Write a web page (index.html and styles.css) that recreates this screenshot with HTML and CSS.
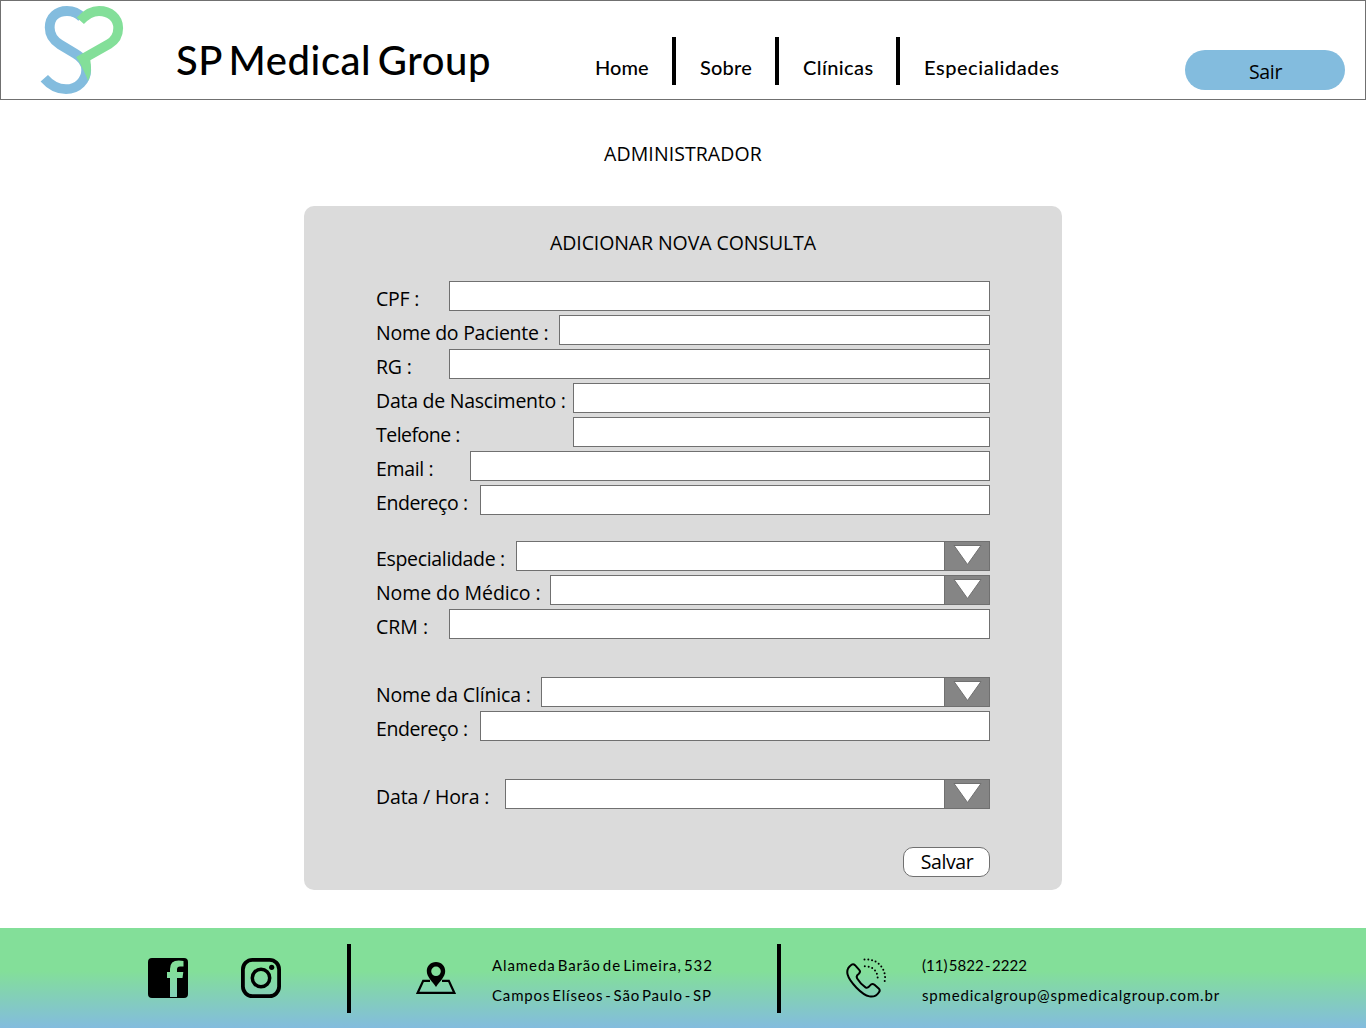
FILE: index.html
```html
<!DOCTYPE html>
<html lang="pt-BR">
<head>
<meta charset="utf-8">
<title>SP Medical Group</title>
<link rel="stylesheet" href="styles.css">
</head>
<body>
<header class="topbar">
  <svg class="logo" viewBox="40 5 84 90" fill="none" stroke-width="9.8">
    <path stroke="#83bcde" d="M44.3 78.3C51 86 58 89.2 66 89.2C78 89.2 86.2 80 86.2 70C86.2 62 82 57.5 75 53.5L60 44.5C52 39.5 49.7 34 49.7 27.5C49.7 17 57 11 67 11C73 11 78 13 82 17.5"/>
    <path stroke="#83df99" d="M80.3 20.8C86.5 14 92 11 99 11C110 11 118.200 18 118.200 28C118.200 36 115 40.500 109 44L79 61"/>
    <path fill="#83df99" d="M76 57L90 58.500C91.500 67 91.500 74 88 81C86 74 82 68 81 65Q79 61 76 57Z"/>
  </svg>
  <h1 class="brand">SP Medical Group</h1>
  <nav class="nav">
    <a class="home">Home</a><i class="bar"></i>
    <a class="sobre">Sobre</a><i class="bar"></i>
    <a class="clinicas">Clínicas</a><i class="bar"></i>
    <a class="espec">Especialidades</a>
  </nav>
  <button class="exit">Sair</button>
</header>
<main class="main">
  <h2 class="role"><span>ADMINISTRADOR</span></h2>
  <form class="card">
    <h3 class="title"><span>ADICIONAR NOVA CONSULTA</span></h3>
    <div class="group patient">
      <div class="row"><label class="w73">CPF :</label><div class="field"></div></div>
      <div class="row"><label class="w183">Nome do Paciente :</label><div class="field"></div></div>
      <div class="row"><label class="w73">RG :</label><div class="field"></div></div>
      <div class="row"><label class="w197">Data de Nascimento :</label><div class="field"></div></div>
      <div class="row"><label class="w197 tel">Telefone :</label><div class="field"></div></div>
      <div class="row"><label class="w94">Email :</label><div class="field"></div></div>
      <div class="row"><label class="w104">Endereço :</label><div class="field"></div></div>
    </div>
    <div class="group doctor">
      <div class="row"><label class="w140">Especialidade :</label><div class="field select"><b class="drop"><svg viewBox="0 0 45 28"><path d="M9 3.500H36L22.500 22.500Z"/></svg></b></div></div>
      <div class="row"><label class="w174">Nome do Médico :</label><div class="field select"><b class="drop"><svg viewBox="0 0 45 28"><path d="M9 3.500H36L22.500 22.500Z"/></svg></b></div></div>
      <div class="row"><label class="w73 crm">CRM :</label><div class="field"></div></div>
    </div>
    <div class="group clinic">
      <div class="row"><label class="w165">Nome da Clínica :</label><div class="field select"><b class="drop"><svg viewBox="0 0 45 28"><path d="M9 3.500H36L22.500 22.500Z"/></svg></b></div></div>
      <div class="row"><label class="w104">Endereço :</label><div class="field"></div></div>
    </div>
    <div class="group date">
      <div class="row"><label class="w129">Data / Hora :</label><div class="field select"><b class="drop"><svg viewBox="0 0 45 28"><path d="M9 3.500H36L22.500 22.500Z"/></svg></b></div></div>
    </div>
    <button class="save">Salvar</button>
  </form>
</main>
<footer class="footer">
  <svg class="facebook" viewBox="0 0 40 40"><path fill-rule="evenodd" d="M4 0H36Q40 0 40 4V36Q40 40 36 40H4Q0 40 0 36V4Q0 0 4 0ZM22 39H29V20H34.500L35.300 14H29V11.500Q29 8.500 32 8.500H35.500V3Q22 .5 22 11V14H19V20H22Z"/></svg>
  <svg class="instagram" viewBox="0 0 40 40" fill="none" stroke="#000"><rect x="1.900" y="1.900" width="36.200" height="36.200" rx="9.500" stroke-width="3.800"/><circle cx="20" cy="20" r="8.700" stroke-width="3.500"/><circle cx="30.700" cy="9.300" r="2.600" fill="#000" stroke="none"/></svg>
  <i class="divider"></i>
  <svg class="pin" viewBox="0 0 40 40"><path fill-rule="evenodd" d="M20 4C14.500 4 10.800 8 10.800 13C10.800 19 16 23 20 29C24 23 29.200 19 29.200 13C29.200 8 25.500 4 20 4ZM20 8.500A4.800 4.800 0 1 1 20 18.100A4.800 4.800 0 1 1 20 8.500Z"/><path fill="none" stroke="#000" stroke-width="2.200" d="M14 22.800H7.200L1.700 34.800H38.300L32.800 22.800H26"/></svg>
  <p class="address"><span class="a1">Alameda Barão de Limeira, 532</span><span class="a2">Campos Elíseos - São Paulo - SP</span></p>
  <i class="divider"></i>
  <svg class="phone" viewBox="0 0 40 40" fill="none" stroke="#000" stroke-width="2" stroke-linejoin="round"><path d="M5.500 6.800Q7.300 5.500 9 7.200L13.200 11.800Q15 13.800 12.800 15.800Q9.700 17.500 11.200 20.500Q14.500 26 19.500 29.300Q21.800 30.700 24 27.500Q26 25 28.500 26.800L32.700 30.500Q34.500 32.200 33 34.200C28 41.500 20 39.500 10.500 29.700C1 20 -2 12 5.500 6.800Z"/><g stroke-linecap="round" stroke-dasharray="0 3.800"><path d="M18.500 1.500C31 0 41 11 38.700 23"/><path d="M18.800 8.300C27 8 32.500 14 31.600 22.500"/></g></svg>
  <p class="contact"><span class="c1">(11) 5822 - 2222</span><span class="c2">spmedicalgroup@spmedicalgroup.com.br</span></p>
</footer>
</body>
</html>
```
FILE: styles.css
```css
* { box-sizing: border-box; }
body { margin: 0; width: 1366px; height: 1028px; background: #fff; color: #000; font: 400 20px/30px "Open Sans", sans-serif; display: flex; flex-direction: column; overflow: hidden; }
svg { display: block; flex: none; }
h1, h2, h3, p { margin: 0; font-weight: 400; }
i { display: block; background: #000; width: 4px; flex: none; }
.topbar { height: 100px; border: 1px solid #707070; display: flex; align-items: flex-start; flex: none; }
.logo { width: 84px; height: 90px; margin: 4px 0 0 39px; }
.brand { width: 419px; margin: 34px 0 0 52px; font: 500 40px/50px Lato, sans-serif; white-space: nowrap; letter-spacing: .55px; word-spacing: -4px; }
.nav { display: flex; width: 590px; margin-top: 36px; font: 500 20px/30px Lato, sans-serif; }
.nav a { padding-top: 15px; white-space: nowrap; }
.home { width: 77px; }
.sobre, .clinicas, .espec { padding-left: 24px; }
.sobre { width: 99px; letter-spacing: .2px; }
.clinicas { width: 117px; letter-spacing: .4px; }
.espec { letter-spacing: .55px; }
.bar { height: 48px; }
.exit { width: 160px; height: 40px; margin-top: 49px; border: 0; border-radius: 20px; background: #83bcde; font: 400 19.500px/40px "Open Sans", sans-serif; padding: 2px 0 0 1px; letter-spacing: -.3px; }
.main { display: flex; flex-direction: column; align-items: center; height: 828px; flex: none; }
.role, .title { font: 400 19.500px/30px "Open Sans", sans-serif; white-space: nowrap; }
.role { margin-top: 39px; height: 67px; letter-spacing: .08px; }
.card { width: 758px; height: 684px; border-radius: 10px; background: #dbdbdb; padding: 22px 72px 0; display: flex; flex-direction: column; }
.title { height: 53px; text-align: center; letter-spacing: -.09px; }
.group { display: flex; flex-direction: column; gap: 4px; }
.doctor { margin-top: 26px; }
.clinic, .date { margin-top: 38px; }
.row { display: flex; height: 30px; }
label { flex: none; padding-top: 3px; white-space: nowrap; font-size: 19.500px; }
.field { flex: 1; background: #fff; border: 1px solid #707070; }
.select { display: flex; justify-content: flex-end; }
.drop { width: 45px; border-left: 1px solid #707070; background: #858585; }
.drop svg { width: 45px; height: 28px; fill: #fff; stroke: #707070; }
.w73 { width: 73px; letter-spacing: -.2px; }
.w94 { width: 94px; letter-spacing: -.35px; }
.w104 { width: 104px; letter-spacing: -.42px; }
.w129 { width: 129px; letter-spacing: -.15px; }
.w140 { width: 140px; letter-spacing: -.33px; }
.w165 { width: 165px; letter-spacing: -.18px; }
.w174 { width: 174px; letter-spacing: -.08px; }
.w183 { width: 183px; letter-spacing: -.26px; }
.w197 { width: 197px; letter-spacing: -.25px; }
.tel { letter-spacing: -.5px; }
.crm { letter-spacing: 0; }
.save { align-self: flex-end; width: 87px; height: 30px; margin-top: 38px; border: 1px solid #707070; border-radius: 10px; background: #fff; font: 400 19.500px/28px "Open Sans", sans-serif; padding: 0 0 0 1px; letter-spacing: -.4px; }
.footer { height: 100px; flex: none; display: flex; align-items: center; padding-left: 148px; background: linear-gradient(#83df99 0%, #83df99 43%, #83bcde 100%); }
.facebook, .instagram, .pin, .phone { width: 40px; height: 40px; }
.instagram { margin-left: 53px; }
.divider { height: 69px; margin-left: 66px; }
.pin, .phone { margin-left: 65px; }
.address, .contact { display: flex; flex-direction: column; margin-left: 36px; padding-top: 4px; font: 400 15px/30px Lato, sans-serif; white-space: nowrap; }
.address { width: 219px; }
.a1 { letter-spacing: .9px; word-spacing: -2.500px; }
.a2 { letter-spacing: .85px; word-spacing: -2.800px; }
.c1 { letter-spacing: 0; word-spacing: -2.400px; }
.c2 { letter-spacing: .82px; }
```
